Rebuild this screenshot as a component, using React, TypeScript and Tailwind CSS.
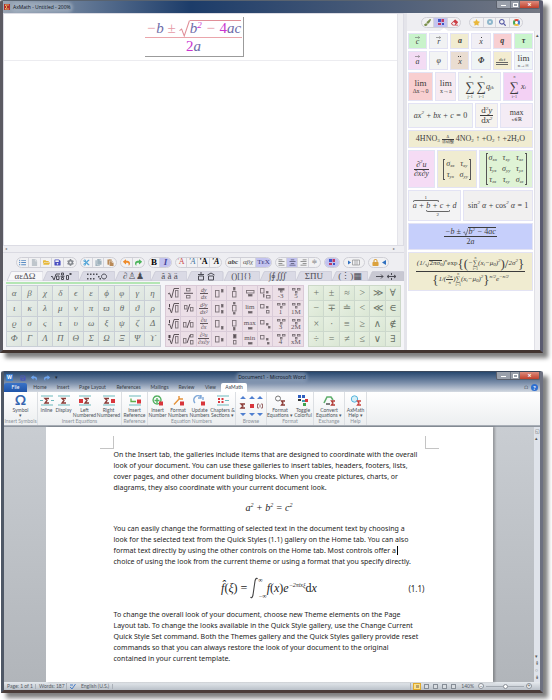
import React from "react";
import type { ReactNode } from "react";
import {
  FaAlignCenter, FaAlignLeft, FaAlignRight, FaCog, FaCopy, FaCut, FaEraser, FaFile, FaFolderOpen,
  FaListUl, FaLock, FaPaintBrush, FaPaste, FaReply, FaSave, FaSearch, FaShare, FaStar,
} from "react-icons/fa";

const serif = "font-['Liberation_Serif','DejaVu_Serif',serif]";
const sans = "font-['Open_Sans','Noto_Sans',sans-serif]";

/* ---------- math building blocks ---------- */

function R({ children }: { children: ReactNode }) {
  return <span className="not-italic">{children}</span>;
}

function Frac({ n, d, bar = "border-current" }: { n: ReactNode; d: ReactNode; bar?: string }) {
  return (
    <span className="inline-flex flex-col items-center align-middle">
      <span className={`self-stretch border-b px-px text-center ${bar}`}>{n}</span>
      <span>{d}</span>
    </span>
  );
}

function Root({ children, tone = "text-current" }: { children: ReactNode; tone?: string }) {
  return (
    <span className="inline-flex items-stretch">
      <svg className={`w-[0.7em] shrink-0 self-stretch ${tone}`} viewBox="0 0 10 16" preserveAspectRatio="none">
        <path d="M0.5 10 L2.5 8.5 L5 15 L10 0.5" fill="none" stroke="currentColor" strokeWidth="1" />
      </svg>
      <span className="relative">
        <span className={`absolute inset-x-0 top-0 border-t border-current ${tone}`} />
        {children}
      </span>
    </span>
  );
}

function Sum({ top, bottom, size = "text-[13px] leading-[16px]" }: { top: ReactNode; bottom: ReactNode; size?: string }) {
  return (
    <span className="inline-flex flex-col items-center not-italic">
      <span className="text-[4px] italic leading-[4px]">{top}</span>
      <span className={size}>∑</span>
      <span className="text-[4px] leading-[4px]">{bottom}</span>
    </span>
  );
}

function Sub({ children }: { children: ReactNode }) {
  return <sub className="text-[5px] leading-none">{children}</sub>;
}

function Sup({ children }: { children: ReactNode }) {
  return <sup className="-top-[0.7em] text-[5px] leading-none">{children}</sup>;
}

function Vec({ children, mark }: { children: ReactNode; mark: ReactNode }) {
  return (
    <span className="flex flex-col items-center">
      <span className="flex h-[2px] items-center">{mark}</span>
      <span className="leading-[8px]">{children}</span>
    </span>
  );
}

const arrow = (
  <svg className="h-[3px] w-[5px]" viewBox="0 0 6 3"><path d="M0 1.500h5.500M4 0l1.500 1.500L4 3" fill="none" stroke="#666" strokeWidth=".7" /></svg>
);
const dots = (n: number) => (
  <span className="flex gap-px">{Array.from({ length: n }, (_, i) => <span key={i} className="size-px bg-[#444]" />)}</span>
);

function Matrix({ rows, cols }: { rows: string[][]; cols: string }) {
  return (
    <span className="flex items-stretch gap-px">
      <span className="w-[2px] border-y border-l border-[#555]" />
      <span className={`grid items-center gap-y-[3px] py-px ${cols}`}>
        {rows.flat().map((t, i) => (
          <span key={i}>{t[0]}<Sub>{t.slice(1)}</Sub></span>
        ))}
      </span>
      <span className="w-[2px] border-y border-r border-[#555]" />
    </span>
  );
}

/* ---------- AxMath window ---------- */

function Pill({ children }: { children: ReactNode }) {
  return (
    <div className="flex h-[11px] items-stretch divide-x divide-[#d4d4dc] overflow-hidden rounded-full border border-[#cfcfd6] bg-[#f1f1f3]">
      {children}
    </div>
  );
}

function Tool({ label, on, w = "w-[12px]", tone = "", children }: { label: string; on?: boolean; w?: string; tone?: string; children: ReactNode }) {
  return (
    <button aria-label={label} className={`flex shrink-0 items-center justify-center text-[7px] leading-none ${w} ${tone} ${on ? "bg-[#c3c3ef]" : ""}`}>
      {children}
    </button>
  );
}

function Squares() {
  return (
    <svg className="size-[8px]" viewBox="0 0 8 8">
      <path fill="#3d55c8" d="M1 1h3v3H1zM5 5h2v2H5z" />
      <path fill="#c03a63" d="M4.500 1H7v3H4.500zM1 5h3v2H1z" />
    </svg>
  );
}

function EditorToolbar() {
  return (
    <div className={`flex h-[18px] items-center gap-[3px] pl-[13px] ${serif}`}>
      <Pill>
        <Tool label="List" tone="text-[#5a8cc4]"><FaListUl /></Tool>
        <Tool label="New" tone="text-[#bfc6cc]"><FaFile /></Tool>
        <Tool label="Open" tone="text-[#e8b93a]" w="w-[11px]"><FaFolderOpen /></Tool>
        <Tool label="Save" tone="text-[#4a4fc0]"><FaSave /></Tool>
        <Tool label="Settings" tone="text-[#85898f]"><FaCog /></Tool>
      </Pill>
      <Pill>
        <Tool label="Cut" tone="text-[#55a6d8]"><FaCut /></Tool>
        <Tool label="Copy" tone="text-[#9fb2bd]" w="w-[11px]"><FaCopy /></Tool>
        <Tool label="Paste" tone="text-[#b98a58]"><FaPaste /></Tool>
      </Pill>
      <Pill>
        <Tool label="Undo" tone="text-[#ee8a2a]"><FaReply /></Tool>
        <Tool label="Redo" tone="text-[#4cb35b]" w="w-[11px]"><FaShare /></Tool>
      </Pill>
      <Pill>
        <Tool label="Bold" w="w-[11px]"><b className="text-[9px]">B</b></Tool>
        <Tool label="Italic" on w="w-[11px]"><b className="text-[9px] italic text-[#44449a]">I</b></Tool>
      </Pill>
      <Pill>
        <Tool label="Red type" w="w-[11px]"><span className="text-[8px] text-[#c8474b]">'A</span></Tool>
        <Tool label="Blue type" w="w-[11px]"><i className="text-[8px] text-[#42729b]">'A</i></Tool>
        <Tool label="Black type"><b className="text-[8px]">'A</b></Tool>
        <Tool label="Slanted type" w="w-[11px]"><b className="text-[8px] italic">'A</b></Tool>
      </Pill>
      <Pill>
        <Tool label="Text" w="w-[15px]"><b className="text-[7px] italic text-[#444]">abc</b></Tool>
        <Tool label="Greek" w="w-[15px]"><i className="text-[7px] text-[#555]">αβχ</i></Tool>
        <Tool label="TeX" on w="w-[15px]"><span className="text-[7px] text-[#3d3d7d]">TᴇX</span></Tool>
      </Pill>
      <Pill>
        <Tool label="Align left" tone="text-[#777]" w="w-[11px]"><FaAlignLeft /></Tool>
        <Tool label="Align center" on tone="text-[#505070]" w="w-[11px]"><FaAlignCenter /></Tool>
        <Tool label="Align right" tone="text-[#777]" w="w-[11px]"><FaAlignRight /></Tool>
        <Tool label="Align equals" tone="text-[#777]" w="w-[11px]">≑</Tool>
      </Pill>
      <Pill>
        <Tool label="Colours" on w="w-[14px]"><Squares /></Tool>
      </Pill>
      <Pill>
        <Tool label="Spacing" w="w-[20px]">
          <svg className="h-[7px] w-[14px]" viewBox="0 0 14 7">
            <path fill="#2e6fbf" d="M1 1.500L4 3.500L1 5.500z" />
            <path d="M5.500 1h7v5h-7zM8 1v5M10 1v5" fill="none" stroke="#999" strokeWidth=".8" />
          </svg>
        </Tool>
      </Pill>
      <Pill>
        <Tool label="Lock" w="w-[19px]" tone="gap-[3px] text-[#dba13d]">
          <FaLock />
          <svg className="h-[5px] w-[4px]" viewBox="0 0 4 5"><path fill="#2e6fbf" d="M4 0v5L0 2.500z" /></svg>
        </Tool>
      </Pill>
    </div>
  );
}

function TabDrawing({ d, fill }: { d: string; fill?: string }) {
  return (
    <svg className="h-[9px] w-[22px]" viewBox="0 0 22 9">
      <path d={d} fill="none" stroke="#4c4c55" strokeWidth="1" />
      {fill && <path d={fill} fill="#4c4c55" />}
    </svg>
  );
}

const paletteTabs: [string, ReactNode][] = [
  ["Greek", "αεΔΩ"],
  ["Fractions", <TabDrawing d="M1 5l1-1l2 4l2-6h4M6.500 4h2.500v3.500H6.500zM11.500 1h2v2h-2zM11.500 5.500h2v2h-2zM10.500 4.300h4M16.500 3.500h2v4h-2z" fill="M19.500 1h2v2h-2z" />],
  ["Dots", <TabDrawing d="M18 2a2.500 2.500 0 1 0 .1 0" fill="M1 1.500h1.500v1.500H1zM4 1.500h1.500v1.500H4zM1 6h1.500v1.500H1zM4 6h1.500v1.500H4zM7 1.500h1.500v1.500H7zM7 6h1.500v1.500H7zM10 1.500h1.500v1.500H10zM12 4h1.500v1.500H12zM13.500 6h1.500v1.500h-1.500z" />],
  ["Symbols", "∂♙♟"],
  ["Accents", "â ã ä"],
  ["Boxes", <TabDrawing d="M3.500 4h5v4h-5zM3 2.500h6M5 1h2M13.500 4h5v4h-5zM12.500 3l3.500-2l3.500 2" />],
  ["Brackets", "()[]{}"],
  ["Integrals", "∫∮∭"],
  ["Operators", "ΣΠU"],
  ["Matrices", "(⋮)▦"],
  ["Arrows", <TabDrawing d="M1 4.500h7M6 2.500l2 2l-2 2M12 4.500h9M14 3l-2 1.500l2 1.500M19 3l2 1.500l-2 1.500M16.500 1v2M16.500 6v2" />],
];

function PaletteTabs() {
  return (
    <div role="tablist" className={`flex h-[10px] pl-[4px] ${serif}`}>
      {paletteTabs.map(([name, t], i) => (
        <button
          key={name}
          role="tab"
          aria-label={name}
          aria-selected={i === 0}
          className="relative flex min-w-0 flex-1 items-center justify-center text-[9px] leading-none text-[#4c4c55]"
        >
          <svg className="absolute inset-0 h-full w-full" viewBox="0 0 36 11" preserveAspectRatio="none">
            <path
              d="M0 11L4 1Q4.500 .5 5 .5H35Q36 .5 36 2V11z"
              fill={i === 0 ? "#f7f7f9" : i === 10 ? "#c8c8d2" : "#dadae5"}
              stroke="#c3c3d0"
              strokeWidth=".7"
            />
          </svg>
          <span className="relative whitespace-nowrap">{t}</span>
        </button>
      ))}
    </div>
  );
}

const greek = [..."αβχδϵεϕφγη", ..."ικλμνπϖθϑρ", ..."ϱσςτυωξψζΔ", ..."ΦΓΛΠΘΣΩΞΨϒ"];
const relations = [..."+±≈>≫∀", ..."−∓≐<≪∈", ..."×·≡≥∧∉", ..."÷=≠≤∨∃"];

type Box = [number, number, number, number, boolean?];
type Template = { boxes?: Box[]; root?: string; frac?: [string, string]; label?: string; slash?: boolean };

const templates: Template[] = [
  { root: "", boxes: [[9, 4, 3, 7]] },
  { boxes: [[5, 2, 4, 3], [5, 9, 4, 3]], root: "bar" },
  { frac: ["dy", "dx"] },
  { boxes: [[3, 4, 4, 7], [9, 3, 2, 3, true]] },
  { boxes: [[5, 5, 4, 6], [6, 1, 2, 3, true]] },
  { boxes: [[3, 4, 8, 3], [5, 8, 4, 2, true]] },
  { boxes: [[2, 2, 4, 5], [5, 8, 1, 3, true], [8, 5, 2, 2, true], [8, 9, 4, 3]] },
  { boxes: [[4, 2, 6, 2, true], [6, 4, 2, 2]], label: "-3" },
  { boxes: [[3, 2, 3, 2], [8, 2, 3, 2], [6, 5, 2, 2]], label: "5" },
  { root: "3", boxes: [[9, 4, 3, 7]] },
  { boxes: [[3, 4, 3, 4], [9, 6, 3, 4]], slash: true },
  { frac: ["d²y", "dx²"] },
  { boxes: [[3, 4, 4, 7], [9, 3, 2, 3, true], [9, 9, 2, 3, true]] },
  { boxes: [[5, 4, 4, 6], [6, 1, 2, 2, true], [6, 11, 2, 2, true]] },
  { boxes: [[5, 10, 4, 2, true]], label: "lim" },
  { boxes: [[2, 3, 4, 4], [8, 5, 2, 2, true], [8, 9, 3, 3]] },
  { boxes: [[3, 2, 3, 2], [8, 2, 3, 2], [6, 5, 2, 2]], label: "1" },
  { boxes: [[3, 2, 3, 2], [8, 2, 3, 2], [6, 5, 2, 2]], label: "1M" },
  { root: "4", boxes: [[9, 4, 3, 7]] },
  { boxes: [[2, 5, 3, 5], [9, 5, 3, 5]], slash: true },
  { frac: ["∂u", "∂x"] },
  { boxes: [[3, 3, 4, 7], [9, 9, 2, 3, true]] },
  { boxes: [[5, 3, 4, 6], [6, 10, 2, 3, true]] },
  { boxes: [[5, 10, 4, 2, true]], label: "max" },
  { boxes: [[2, 3, 4, 4], [8, 6, 2, 2, true], [10, 9, 2, 2, true]] },
  { boxes: [[3, 2, 3, 2], [8, 2, 3, 2], [6, 5, 2, 2]], label: "3" },
  { boxes: [[3, 2, 3, 2], [8, 2, 3, 2], [6, 5, 2, 2]], label: "2M" },
  { root: "n", boxes: [[9, 4, 3, 7]] },
  { boxes: [[2, 6, 3, 5], [9, 2, 3, 3], [9, 8, 3, 4]], slash: true },
  { frac: ["∂²u", "∂x∂y"] },
  { boxes: [[3, 4, 4, 6], [9, 6, 2, 3, true]] },
  { boxes: [[6, 2, 3, 4, true], [6, 8, 3, 4]] },
  { boxes: [[5, 10, 4, 2, true]], label: "min" },
  { boxes: [[2, 3, 4, 4], [8, 6, 2, 2, true], [9, 10, 2, 2, true]] },
  { boxes: [[3, 2, 3, 2], [8, 2, 3, 2], [6, 5, 2, 2]], label: "4" },
  { boxes: [[3, 2, 3, 2], [8, 2, 3, 2], [6, 5, 2, 2]], label: "xM" },
];

function TemplateCell({ t }: { t: Template }) {
  const word = t.label && t.label.length === 3;
  return (
    <button className="relative flex items-center justify-center bg-[#ecdfe7] text-[#5f565b]">
      {t.frac && (
        <span className="text-[6px] italic leading-[6px]"><Frac n={t.frac[0]} d={t.frac[1]} /></span>
      )}
      {t.boxes && (
        <svg className="size-[14px]" viewBox="0 0 14 14">
          {t.boxes.map(([x, y, w, h, full], i) => (
            <rect key={i} x={x + 0.5} y={y + 0.5} width={w - 0.5} height={h - 0.5} fill={full ? "#5a5056" : "none"} stroke="#7d7379" strokeWidth=".9" />
          ))}
          {t.root === "bar" && <path d="M3 7.300H12" stroke="#4c4249" strokeWidth=".9" />}
          {t.root !== undefined && t.root !== "bar" && (
            <path d="M2 8L3.500 7L5.500 12L8 2.500H13" fill="none" stroke="#5f565b" strokeWidth="1" />
          )}
          {(t.root === "3" || t.root === "4" || t.root === "n") && <path d="M3.500 3v3" stroke="#4c4249" strokeWidth={t.root === "n" ? 2 : 1} />}
          {t.slash && <path d="M6 11L9 3" stroke="#4c4249" strokeWidth=".9" />}
        </svg>
      )}
      {t.label && (
        <span className={`absolute inset-x-0 text-center leading-none ${word ? "top-[3px] text-[7px]" : "bottom-0 text-[7px]"}`}>{t.label}</span>
      )}
    </button>
  );
}

function SymbolPalettes() {
  return (
    <div className={`bg-[#f5f5f8] px-[3px] pb-[3px] pt-px ${serif}`}>
      <div className="mb-px w-[154px] border-t-2 border-[#b4e6b4]" />
      <div className="grid h-[62px] grid-cols-[10fr_9fr_6fr] gap-[4px]">
        <div className="grid grid-cols-10 grid-rows-4 gap-px border border-[#c9cfd6] bg-[#c9cfd6]">
          {greek.map((g, i) => (
            <button key={i} className="bg-linear-to-br from-[#e8eee9] to-[#dde5df] text-[9px] italic leading-none text-[#666c69]">{g}</button>
          ))}
        </div>
        <div className="grid grid-cols-9 grid-rows-4 gap-px border border-[#d9c9d6] bg-[#d9cbd8]">
          {templates.map((t, i) => <TemplateCell key={i} t={t} />)}
        </div>
        <div className="grid grid-cols-6 grid-rows-4 gap-px border border-[#ccd8c8] bg-[#ccd8cc]">
          {relations.map((g, i) => (
            <button key={i} className="bg-linear-to-br from-[#e7f0e2] to-[#dbe7d5] text-[10px] leading-none text-[#6a7266]">{g}</button>
          ))}
        </div>
      </div>
    </div>
  );
}

function Cell({ tint, children }: { tint: string; children: ReactNode }) {
  return (
    <button className={`flex min-w-0 items-center justify-center whitespace-nowrap border border-[#e3e3f4] ${tint}`}>
      <span className="flex items-center">{children}</span>
    </button>
  );
}

function Gallery() {
  return (
    <div className={`flex min-w-0 flex-1 flex-col gap-[2px] bg-white px-px pt-[2px] text-[8px] italic leading-none text-[#3c3c3c] ${serif}`}>
      <div className="grid h-[16px] grid-cols-6 gap-[2px]">
        <Cell tint="bg-[#c9f3cb]"><Vec mark={arrow}>c</Vec></Cell>
        <Cell tint="bg-[#f1f2f3]"><Vec mark={arrow}>r</Vec></Cell>
        <Cell tint="bg-[#f1ecd0]"><b>a</b></Cell>
        <Cell tint="bg-[#f1eff5]"><Vec mark={dots(1)}>x</Vec></Cell>
        <Cell tint="bg-[#f8cfd2]"><b>q</b></Cell>
        <Cell tint="bg-[#c9f5cc]"><b>τ</b></Cell>
      </div>
      <div className="grid h-[19px] grid-cols-6 gap-[2px]">
        <Cell tint="bg-[#f3dcf4]"><Vec mark={arrow}>a</Vec></Cell>
        <Cell tint="bg-[#f3f4f4]">φ</Cell>
        <Cell tint="bg-[#eaddd1]"><Vec mark={dots(2)}>x</Vec></Cell>
        <Cell tint="bg-[#eff4f4]"><b>Φ</b></Cell>
        <Cell tint="bg-[#f3ecd0]">
          <span className="flex w-[12px] flex-col items-center">
            <span className="text-[5px] not-italic">def</span>
            <span className="h-[3px] w-full border-y border-[#666]" />
          </span>
        </Cell>
        <Cell tint="bg-[#f0f5f6]">
          <span className="flex flex-col items-center text-[9px] not-italic">lim<span className="text-[5px]">n→∞</span></span>
        </Cell>
      </div>
      <div className="grid h-[29px] grid-cols-[25fr_21fr_42fr_30fr] gap-[2px]">
        <Cell tint="bg-[#f8cfd0]"><span className="flex flex-col items-center text-[9px] not-italic">lim<span className="text-[6px]">Δx→0</span></span></Cell>
        <Cell tint="bg-[#f6eaf1]"><span className="flex flex-col items-center text-[9px] not-italic">lim<span className="text-[6px]">x→a</span></span></Cell>
        <Cell tint="bg-[#f1f4f0]"><Sum top="n" bottom="j=1" />&nbsp;<Sum top="n" bottom="i=1" />q<Sub>jk</Sub></Cell>
        <Cell tint="bg-[#f3d1f4]"><Sum top="n" bottom="i=1" />&nbsp;x<Sub>i</Sub></Cell>
      </div>
      <div className="grid h-[25px] grid-cols-[64fr_23fr_32fr] gap-[2px] text-[9px]">
        <Cell tint="bg-[#f1f4f0]"><span className="text-[8px]">ax<Sup>2</Sup> + bx + c = <R>0</R></span></Cell>
        <Cell tint="bg-[#f6f3ee]"><Frac n={<span><R>d</R><Sup>2</Sup>y</span>} d={<span><R>d</R>x<Sup>2</Sup></span>} /></Cell>
        <Cell tint="bg-[#f4ecf5]"><span className="flex flex-col items-center text-[8px] not-italic">max<span className="text-[5px]">x∈ℝ</span></span></Cell>
      </div>
      <div className="grid h-[18px]">
        <Cell tint="bg-[#f0ecd1]">
          <span className="flex items-center gap-[2px] text-[8px] not-italic">
            <span>4HNO<Sub>3</Sub></span>
            <span className="flex flex-col items-center text-[4px]"><Frac n="Δ" d="浓硝酸" /></span>
            <span>4NO<Sub>2</Sub> ↑ +O<Sub>2</Sub> ↑ +2H<Sub>2</Sub>O</span>
          </span>
        </Cell>
      </div>
      <div className="grid h-[38px] grid-cols-[27fr_41fr_54fr] gap-[2px]">
        <Cell tint="bg-[#f5dcf5]"><span className="text-[8px]"><Frac n={<span>∂<Sup>2</Sup>u</span>} d="∂x∂y" /></span></Cell>
        <Cell tint="bg-[#f0ecd1]"><Matrix cols="grid-cols-2 gap-x-[5px]" rows={[["σxx", "τxy"], ["τyx", "σyy"]]} /></Cell>
        <Cell tint="bg-[#dff3d5]"><Matrix cols="grid-cols-3 gap-x-[5px]" rows={[["σxx", "τxy", "τxz"], ["τyx", "σyy", "τyz"], ["τzx", "τzy", "σzz"]]} /></Cell>
      </div>
      <div className="grid h-[31px] grid-cols-[53fr_69fr] gap-[2px]">
        <Cell tint="bg-[#f3f3f4]">
          <span className="flex flex-col text-[8px]">
            <span className="w-[26px] text-center text-[5px] not-italic">1</span>
            <span className="h-[2px] w-[26px] rounded-t-[2px] border-x border-t border-[#666]" />
            <span>a + b + c + d</span>
            <span className="ml-[13px] h-[2px] w-[24px] rounded-b-[2px] border-x border-b border-[#666]" />
            <span className="ml-[13px] w-[24px] text-center text-[5px] not-italic">2</span>
          </span>
        </Cell>
        <Cell tint="bg-[#f1f0f0]"><span className="text-[8px]"><R>sin</R><Sup>2</Sup> α + <R>cos</R><Sup>2</Sup> α = <R>1</R></span></Cell>
      </div>
      <div className="grid h-[27px]">
        <Cell tint="bg-[#c6cffb]">
          <span className="text-[8px] leading-[9px]">
            <Frac n={<span className="inline-flex items-end">−b ±&nbsp;<Root>b<Sup>2</Sup> − <R>4</R>ac</Root></span>} d={<span><R>2</R>a</span>} />
          </span>
        </Cell>
      </div>
      <div className="grid h-[39px]">
        <Cell tint="bg-[#f0ecd1]">
          <span className="text-[7px]">
            <Frac
              n={
                <span className="inline-flex items-center">
                  (1/<Root><R>2</R>πσ<Sub>0</Sub></Root>)<Sup>n</Sup> <R>exp</R>
                  <span className="text-[13px] not-italic">{"{("}</span>−<Sum top="n" bottom="i=1" size="text-[7px]" />(x<Sub>i</Sub>−μ<Sub>0</Sub>)<Sup>2</Sup>
                  <span className="text-[13px] not-italic">)/</span>2σ<Sup>2</Sup>
                  <span className="text-[13px] not-italic">{"}"}</span>
                </span>
              }
              d={
                <span className="inline-flex items-center">
                  <span className="text-[13px] not-italic">{"{"}</span>1/(<span className="text-[5px]"><Frac n="2π" d="n" /></span>)
                  <Sum top="n" bottom="i=1" size="text-[7px]" />(x<Sub>i</Sub>−μ<Sub>0</Sub>)<Sup>2</Sup>
                  <span className="text-[13px] not-italic">{"}"}</span>
                  <Sup>n/2</Sup>e<Sup>−n/2</Sup>
                </span>
              }
            />
          </span>
        </Cell>
      </div>
    </div>
  );
}

function WindowButtons() {
  return (
    <div className="flex self-start overflow-hidden rounded-b-[2px] border-x border-b border-[#5a5f6b]">
      <button aria-label="Minimize" className="flex h-[7px] w-[13px] items-end justify-center bg-[#9aa0ab] pb-[2px]"><span className="h-px w-[5px] bg-white" /></button>
      <button aria-label="Maximize" className="flex h-[7px] w-[10px] items-center justify-center border-x border-[#6f7683] bg-[#9aa0ab]"><span className="h-[4px] w-[5px] border border-white" /></button>
      <button aria-label="Close" className="h-[7px] w-[19px] bg-linear-to-b from-[#dd8a7c] to-[#bf3f2b] text-[7px] font-bold leading-[6px] text-white">×</button>
    </div>
  );
}

function AxMathWindow() {
  return (
    <section className="overflow-hidden rounded-t-[2px] border-r-[3px] border-b-[3px] border-l-[3px] border-t border-b-[#42342f] border-l-[#5b5a62] border-r-[#5a5b70] border-t-[#59636f] shadow-[5px_5px_4px_rgba(0,0,0,0.5)]">
      <header className="flex h-[12px] items-center gap-[3px] bg-linear-to-r from-[#9aa6b5] via-[#1c3c69] via-35% to-[#747883]">
        <svg className="ml-px size-[6px]" viewBox="0 0 6 6"><path fill="#b02a2a" d="M0 0h6v6H0z" /><path d="M1 1h4M1 1l2 2l-2 2h4" stroke="#f2d36b" fill="none" strokeWidth=".8" /></svg>
        <span className={`rounded-full bg-[#a9b5c4]/60 text-[5px] leading-[7px] text-[#0c131d] shadow-[0_0_3px_2px_#a9b5c499] ${sans}`}>AxMath - Untitled - 200%</span>
        <span className="flex-1" />
        <WindowButtons />
      </header>
      <div className="flex bg-[#eeeef2]">
        <div className="min-w-0 flex-1">
          <div className="flex h-[233px] border border-[#dcdce4] bg-white">
            <div className="min-w-0 flex-1">
              <div className="border-b border-[#ececf0] pb-[3px] pt-[3px]">
                <div className="flex pl-[141px]">
                  <div className={`flex border-b border-r border-[#9b9b9b] pb-px pr-px text-[15px] italic leading-[17px] text-[#6d6ba8] ${serif}`}>
                    <Frac
                      bar="border-[#eaa5ab]"
                      n={
                        <span className="flex items-end whitespace-pre pt-[3px]">
                          <span><span className="text-[#e59aa6]">−</span>b <span className="not-italic text-[#e59aa6]">±</span> </span>
                          <Root tone="text-[#e08f98]">
                            b<sup className="-top-[0.6em] text-[9px] leading-none text-[#c935cf]">2</sup> <span className="text-[#e59aa6]">−</span> <span className="not-italic text-[#c935cf]">4</span>ac
                          </Root>
                        </span>
                      }
                      d={<span><span className="not-italic text-[#c935cf]">2</span>a</span>}
                    />
                  </div>
                </div>
              </div>
            </div>
            <div className="w-[6px] border-l border-[#e4e4ea] bg-[#f0f0f3]" />
          </div>
          <div className="flex h-[7px] items-center justify-between border-b border-[#dadae2] px-[2px] text-[4px] leading-none text-[#777]"><span>◂</span><span className="mr-[7px]">▸</span></div>
          <EditorToolbar />
          <PaletteTabs />
          <SymbolPalettes />
        </div>
        <aside className="flex w-[136px] shrink-0 flex-col border-l-[3px] border-[#e4e4ea]">
          <div className="flex h-[18px] items-center gap-[8px] pl-[14px]">
            <Pill>
              <Tool label="Brush" tone="text-[#7b8f4c]"><FaPaintBrush /></Tool>
              <Tool label="Gallery" on w="w-[14px]"><Squares /></Tool>
              <Tool label="Eraser" tone="text-[#cc3e45]"><FaEraser /></Tool>
            </Pill>
            <Pill>
              <Tool label="Favourites" tone="text-[#e9b73a]" w="w-[14px]"><FaStar /></Tool>
              <Tool label="Ring"><span className="size-[6px] rounded-full border-2 border-[#8fb8cc]" /></Tool>
              <Tool label="Search" tone="text-[#575ba5]" w="w-[14px]"><FaSearch /></Tool>
              <Tool label="Browser"><span className="size-[7px] rounded-full border-2 border-b-[#eebb3c] border-l-[#46a556] border-r-[#3d7bd2] border-t-[#dd4436] bg-white" /></Tool>
            </Pill>
          </div>
          <div className="relative flex flex-1 bg-white">
            <svg className="absolute -top-[3px] left-[33px] h-[3px] w-[8px]" viewBox="0 0 8 3"><path fill="#fff" d="M0 3L4 0L8 3z" /></svg>
            <Gallery />
            <div className="w-[6px] border-l border-[#e0e0e6] bg-[#f1f1f4] text-center text-[5px] leading-[8px] text-[#555]">▴</div>
          </div>
        </aside>
      </div>
    </section>
  );
}

/* ---------- Word window ---------- */

const ribbonTabs: [string, string][] = [
  ["Home", "w-[24px]"], ["Insert", "w-[22px]"], ["Page Layout", "w-[37px]"], ["References", "w-[35px]"],
  ["Mailings", "w-[27px]"], ["Review", "w-[27px]"], ["View", "w-[21px]"], ["AxMath", "w-[26px]"],
];

function EqIcon({ sigma, dot, short }: { sigma: number; dot?: number; short?: boolean }) {
  return (
    <svg className="h-[11px] w-[14px]" viewBox="0 0 14 11">
      <path d={short ? "M1 1h12M1 10h12M0 5.500h3M11 5.500h3" : "M1 1h12M1 10h12"} stroke="#6db9bd" strokeWidth="1" />
      <path d={`M${sigma + 4} 3.500h-4l2 2l-2 2.500h4`} fill="none" stroke="#8a3a35" strokeWidth="1.300" />
      {dot !== undefined && <rect x={dot} y="4" width="4" height="4" fill="#d8363c" />}
    </svg>
  );
}

function RedIcon({ d, color }: { d: string; color: string }) {
  return (
    <svg className="h-[11px] w-[13px]" viewBox="0 0 13 11">
      <path d={d} fill="none" stroke={color} strokeWidth="1.400" />
      <rect x="8" y="6.500" width="4" height="4" fill="#d8363c" />
    </svg>
  );
}

function Command({ icon, lines, w }: { icon: ReactNode; lines: string[]; w: string }) {
  return (
    <button className={`flex shrink-0 flex-col items-center text-[5px] leading-[5px] text-[#4d545c] ${w}`}>
      <span className="mb-[2px] flex h-[12px] items-center">{icon}</span>
      {lines.map((l) => <span key={l} className="whitespace-nowrap">{l}</span>)}
    </button>
  );
}

function Group({ name, w, children }: { name: string; w: string; children: ReactNode }) {
  return (
    <div className={`flex shrink-0 flex-col justify-between border-r border-[#dcdfe3] pb-px pt-[2px] ${w}`}>
      <div className="flex justify-center">{children}</div>
      <div className="whitespace-nowrap text-center text-[5px] leading-[5px] text-[#8b9199]">{name}</div>
    </div>
  );
}

function Ribbon() {
  return (
    <div className="flex h-[34px] border-b border-[#a9afb7] bg-linear-to-b from-white to-[#eceef0] font-[Lato,'Open_Sans',sans-serif]">
      <Group name="Insert Symbols" w="w-[34px]">
        <Command w="w-[24px]" lines={["Symbol", "▾"]} icon={<span className="text-[14px] font-bold leading-none text-[#3465b0]">Ω</span>} />
      </Group>
      <Group name="Insert Equations" w="w-[84px]">
        <Command w="w-[16px]" lines={["Inline"]} icon={<EqIcon sigma={5} short />} />
        <Command w="w-[18px]" lines={["Display"]} icon={<EqIcon sigma={5} />} />
        <Command w="w-[24px]" lines={["Left", "Numbered"]} icon={<EqIcon sigma={7} dot={1} />} />
        <Command w="w-[24px]" lines={["Right", "Numbered"]} icon={<EqIcon sigma={3} dot={9} />} />
      </Group>
      <Group name="Reference" w="w-[26px]">
        <Command
          w="w-[24px]"
          lines={["Insert", "Reference"]}
          icon={
            <svg className="h-[11px] w-[14px]" viewBox="0 0 14 11">
              <path d="M1 1h12M1 10h12" stroke="#6db9bd" />
              <path d="M3 3.500v3h5" fill="none" stroke="#5fae4c" strokeWidth="1.300" />
              <rect x="9" y="4.500" width="4" height="4" fill="#d8363c" />
            </svg>
          }
        />
      </Group>
      <Group name="Equation Numbers" w="w-[88px]">
        <Command w="w-[19px]" lines={["Insert", "Number"]} icon={<RedIcon color="#53b061" d="M6 1a4 4 0 1 0 .1 0M6 3v5M3.500 5.500h5" />} />
        <Command w="w-[22px]" lines={["Format", "Numbers"]} icon={<RedIcon color="#e5933b" d="M2 9.500L8 3M7 1v3h4" />} />
        <Command w="w-[21px]" lines={["Update", "Numbers"]} icon={<RedIcon color="#7fa8d8" d="M2 8a4 4 0 0 1 6-6M8 0v3H5M10 2v3" />} />
        <Command
          w="w-[25px]"
          lines={["Chapters &", "Sections ▾"]}
          icon={
            <svg className="h-[11px] w-[14px]" viewBox="0 0 14 11">
              <path d="M1 1h12M1 10h12M9 5.500h4" stroke="#6db9bd" />
              <path d="M2 3h2v2H2zM5.500 3h2v2h-2zM2 6h2v2H2zM5.500 6h2v2h-2z" fill="#d8363c" />
            </svg>
          }
        />
      </Group>
      <Group name="Browse" w="w-[31px]">
        <svg className="mt-px h-[22px] w-[25px]" viewBox="0 0 25 22">
          <path fill="#4f7fd0" d="M1 4l3-3l3 3zM10 4l3-3l3 3zM18 4l3-3l3 3zM1 18h6l-3 3zM10 18h6l-3 3zM18 18h6l-3 3z" />
          <path d="M6 9H2l2 2l-2 2h4" fill="none" stroke="#8a3a35" strokeWidth="1.300" />
          <path fill="#d8363c" d="M11 9h4v4h-4z" />
          <path d="M20 9h-1.500v4H20M22 9h1.500v4H22M21 9.500v3" fill="none" stroke="#9a6a6a" strokeWidth="1" />
        </svg>
      </Group>
      <Group name="Format" w="w-[47px]">
        <Command
          w="w-[26px]"
          lines={["Format", "Equations ▾"]}
          icon={
            <svg className="h-[11px] w-[12px]" viewBox="0 0 12 11">
              <circle cx="4" cy="3.500" r="2.500" fill="none" stroke="#777" />
              <path d="M11 6H7.500l1.500 2l-1.500 2H11" fill="none" stroke="#8a3a35" strokeWidth="1.300" />
            </svg>
          }
        />
        <Command
          w="w-[20px]"
          lines={["Toggle", "Colorful"]}
          icon={
            <svg className="h-[11px] w-[11px]" viewBox="0 0 11 11">
              <path fill="#2f5fc0" d="M0 0h3v3H0zM4 0h3v3H4z" /><path fill="#333" d="M0 4h3v2H0z" />
              <path fill="#40a0b5" d="M4 5h3v2H4z" /><path fill="#d8363c" d="M7 4h3v3H7z" /><path fill="#3fa04e" d="M5 8h3v3H5z" />
            </svg>
          }
        />
      </Group>
      <Group name="Exchange" w="w-[31px]">
        <Command
          w="w-[28px]"
          lines={["Convert", "Equations ▾"]}
          icon={
            <svg className="h-[11px] w-[13px]" viewBox="0 0 13 11">
              <path d="M1 8l3-6h4l2 3" fill="none" stroke="#5fae6c" strokeWidth="1.600" />
              <path d="M3 9h4" stroke="#555" strokeWidth="1.500" />
              <path d="M12 6H8.500l1.500 2l-1.500 2H12" fill="none" stroke="#b23a35" strokeWidth="1.300" />
            </svg>
          }
        />
      </Group>
      <Group name="Help" w="w-[22px]">
        <Command
          w="w-[18px]"
          lines={["AxMath", "Help ▾"]}
          icon={
            <svg className="h-[11px] w-[12px]" viewBox="0 0 12 11">
              <circle cx="4.500" cy="4" r="3.200" fill="#d4eef7" stroke="#55b4dd" />
              <path d="M11 6H7.500l1.500 2l-1.500 2H11" fill="none" stroke="#c8443f" strokeWidth="1.300" />
            </svg>
          }
        />
      </Group>
    </div>
  );
}

const first = [
  "On the Insert tab, the galleries include items that are designed to coordinate with the overall",
  "look of your document. You can use these galleries to insert tables, headers, footers, lists,",
  "cover pages, and other document building blocks. When you create pictures, charts, or",
  "diagrams, they also coordinate with your current document look.",
];
const second = [
  "You can easily change the formatting of selected text in the document text by choosing a",
  "look for the selected text from the Quick Styles (1.1) gallery on the Home tab. You can also",
  "format text directly by using the other controls on the Home tab. Most controls offer a",
  "choice of using the look from the current theme or using a format that you specify directly.",
];
const third = [
  "To change the overall look of your document, choose new Theme elements on the Page",
  "Layout tab. To change the looks available in the Quick Style gallery, use the Change Current",
  "Quick Style Set command. Both the Themes gallery and the Quick Styles gallery provide reset",
  "commands so that you can always restore the look of your document to the original",
  "contained in your current template.",
];

function Paragraph({ lines, caretAt }: { lines: string[]; caretAt?: number }) {
  return (
    <p>
      {lines.map((l, i) => (
        <span key={i} className="flex h-[11px] items-center whitespace-nowrap">
          {l}
          {caretAt === i && <span className="ml-px h-[9px] border-l border-black" />}
        </span>
      ))}
    </p>
  );
}

function Page() {
  return (
    <article className="w-[447px] bg-white pb-[18px] shadow-[2px_0_2px_rgba(0,0,0,0.25)]">
      <div className="flex justify-between px-[54px] pt-[9px]">
        <span className="h-[13px] w-[14px] border-b border-r border-[#c4c4c4]" />
        <span className="h-[13px] w-[14px] border-b border-l border-[#c4c4c4]" />
      </div>
      <div className="px-[68px] font-['Noto_Sans','Open_Sans',sans-serif] text-[7px] leading-[11px] text-[#1c1c1c]">
        <Paragraph lines={first} />
        <div className={`flex h-[30px] items-center justify-center text-[10px] italic leading-none ${serif}`}>
          <span>a<sup className="-top-[0.7em] text-[6px]">2</sup> + b<sup className="-top-[0.7em] text-[6px]">2</sup> = c<sup className="-top-[0.7em] text-[6px]">2</sup></span>
        </div>
        <Paragraph lines={second} caretAt={2} />
        <div className="grid h-[42px] grid-cols-[1fr_auto_1fr] items-center">
          <span />
          <span className={`flex items-center text-[12px] italic leading-none ${serif}`}>
            <span className="whitespace-pre">f̂<R>(</R>ξ<R>) = </R></span>
            <svg className="h-[22px] w-[8px]" viewBox="0 0 8 22"><path d="M7.500 2Q6 0 5 4L3 18Q2 22 .5 20" fill="none" stroke="#444" strokeWidth="1.100" /></svg>
            <span className="flex flex-col justify-between self-stretch text-[6px]"><span>∞</span><span className="pt-[10px]">−∞</span></span>
            <span>f<R>(</R>x<R>)</R>e<sup className="-top-[0.8em] text-[6px] leading-none">−2πixξ</sup><R>d</R>x</span>
          </span>
          <span className="text-right text-[8px]">(1.1)</span>
        </div>
        <Paragraph lines={third} />
      </div>
    </article>
  );
}

function StatusBar() {
  const round = "flex size-[6px] items-center justify-center rounded-full border border-[#8a9098] bg-[#f2f3f5] text-[5px] leading-none text-[#555]";
  return (
    <footer className="flex h-[8px] items-center bg-linear-to-b from-[#e6eaee] to-[#b9c0c8] font-[Lato,'Open_Sans',sans-serif] text-[5px] leading-none text-[#555b63]">
      <span className="w-[31px] pl-[3px]">Page: 1 of 1</span>
      <span className="w-[31px] border-l border-[#aab0b8] pl-[3px]">Words: 187</span>
      <span className="flex w-[12px] justify-center border-l border-[#aab0b8]">
        <svg className="size-[7px]" viewBox="0 0 7 7"><path d="M1 4l2 2l3.500-5M1 2h3" fill="none" stroke="#4a7fc8" strokeWidth="1" /></svg>
      </span>
      <span className="border-r border-[#aab0b8] px-[3px]">English (U.S.)</span>
      <span className="flex-1" />
      <span className="flex items-center gap-[2px] border-l border-[#aab0b8] pl-[2px]">
        <button aria-label="Print layout" className="flex h-[7px] w-[8px] items-center justify-center border border-[#e0aa2c] bg-[#fbe08a]"><span className="size-[3px] bg-[#b7a26a]" /></button>
        {["Reading", "Web", "Outline", "Draft"].map((n) => (
          <button key={n} aria-label={n} className="mx-px size-[5px] border border-[#868d96] bg-[#d9dde1]" />
        ))}
      </span>
      <span className="mx-[4px]">140%</span>
      <button aria-label="Zoom out" className={round}>−</button>
      <input
        type="range"
        aria-label="Zoom"
        defaultValue={50}
        className="mx-[2px] h-[6px] w-[38px] appearance-none bg-transparent [&::-webkit-slider-runnable-track]:h-px [&::-webkit-slider-runnable-track]:bg-[#a3a9b1] [&::-webkit-slider-thumb]:-mt-[2px] [&::-webkit-slider-thumb]:size-[5px] [&::-webkit-slider-thumb]:appearance-none [&::-webkit-slider-thumb]:rounded-full [&::-webkit-slider-thumb]:border [&::-webkit-slider-thumb]:border-[#8a9098] [&::-webkit-slider-thumb]:bg-white"
      />
      <button aria-label="Zoom in" className={`mr-[8px] ${round}`}>+</button>
    </footer>
  );
}

function WordWindow() {
  return (
    <section className={`overflow-hidden rounded-t-[2px] border-x-[3px] border-b-[3px] border-t border-b-[#4a3c38] border-l-[#4f5866] border-r-[#6d7080] border-t-[#39475c] shadow-[5px_5px_4px_rgba(0,0,0,0.5)] ${sans}`}>
      <div className="bg-linear-to-b from-[#28486f] via-[#7d90ab] via-55% to-[#d5dae2]">
        <header className="flex h-[11px] items-center">
          <div className="flex w-[130px] items-center gap-[5px] pl-[2px] text-[6px] leading-none">
            <span className="flex size-[7px] items-center justify-center rounded-[1px] bg-[#3b7fd0] text-[5px] font-bold text-white">W</span>
            <button aria-label="Save" className="ml-[2px] text-[#4b58b5]"><FaSave /></button>
            <button aria-label="Undo" className="text-[#6ea4ee]"><FaReply /></button>
            <button aria-label="Redo" className="ml-[2px] text-[#6ea4ee]"><FaShare /></button>
            <span className="text-[5px] text-[#1c2634]">▾</span>
          </div>
          <div className="flex flex-1 justify-center text-[5px] leading-[7px] text-[#0a121e]">
            <span className="rounded-full bg-[#8fa2ba]/60 shadow-[0_0_3px_2px_#8fa2ba99]">Document1 - Microsoft Word</span>
          </div>
          <div className="flex w-[130px] justify-end self-stretch"><WindowButtons /></div>
        </header>
        <nav className="flex h-[9px] items-stretch font-[Lato,'Open_Sans',sans-serif] text-[5px] leading-[9px] text-[#363d47]">
          <button className="mr-px w-[23px] rounded-t-[2px] bg-linear-to-b from-[#3a73c8] to-[#1f54a8] text-white">File</button>
          {ribbonTabs.map(([t, w]) => (
            <button key={t} className={`shrink-0 whitespace-nowrap text-center ${w} ${t === "AxMath" ? "rounded-t-[2px] bg-white" : ""}`}>{t}</button>
          ))}
          <span className="flex-1" />
          <button aria-label="Collapse ribbon" className="mr-[3px]">⌂</button>
          <button aria-label="Help" className="mr-[2px] size-[7px] self-center rounded-full bg-[#2f6fd0] text-[6px] font-bold leading-[7px] text-white">?</button>
        </nav>
      </div>
      <Ribbon />
      <main className="flex border-t border-[#8f969f] bg-linear-to-b from-[#c9cdd2] to-[#b1b5ba]">
        <div className="flex min-w-0 flex-1 justify-center"><Page /></div>
        <div className="flex w-[6px] flex-col items-center justify-between bg-[#dfe3ea] py-px text-[5px] leading-[7px] text-[#555]">
          <span className="flex flex-col"><span>◱</span><span>▴</span></span>
          <span className="flex flex-col"><span>▾</span><span>⇞</span><span>○</span><span>⇟</span></span>
        </div>
      </main>
      <StatusBar />
    </section>
  );
}

export default function App() {
  return (
    <div className="flex flex-col gap-[18px] bg-white pb-[8px] pr-[9px]">
      <AxMathWindow />
      <div className="pl-px"><WordWindow /></div>
    </div>
  );
}
